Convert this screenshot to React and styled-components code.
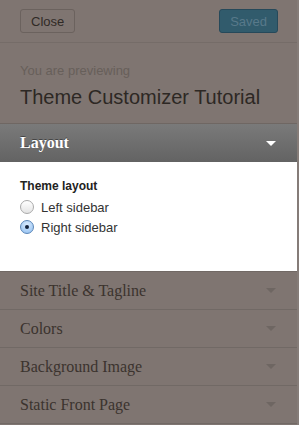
import styled, { createGlobalStyle } from "styled-components";

const GlobalStyle = createGlobalStyle`
  html, body { margin: 0; padding: 0; }
  body {
    background: #7f7571;
    font-family: "Liberation Sans", Arial, sans-serif;
  }
`;

const sections = ["Site Title & Tagline", "Colors", "Background Image", "Static Front Page"];

const Panel = styled.div`
  width: 299px;
  height: 425px;
  overflow: hidden;
  background: #7f7571;
  box-sizing: border-box;
  border-right: 2px solid #857c78;
`;

const TopBar = styled.div`
  display: flex;
  justify-content: space-between;
  align-items: center;
  height: 42px;
  padding: 0 19px 0 20px;
  border-bottom: 1px solid #756c68;
`;

const Button = styled.button`
  height: 24px;
  padding: 0 10px;
  border-radius: 3px;
  font-family: "Liberation Sans", Arial, sans-serif;
  font-size: 13px;
  border: 1px solid ${(p) => (p.$primary ? "#26495a" : "#6b625e")};
  background: ${(p) => (p.$primary ? "#315b6c" : "#7f7571")};
  color: ${(p) => (p.$primary ? "#58798a" : "#302a26")};
`;

const Info = styled.div`
  padding: 20px 20px 14px;
  border-bottom: 1px solid #6f6763;
`;

const Small = styled.div`
  font-size: 13px;
  color: #675f5a;
  line-height: 16px;
`;

const Title = styled.div`
  font-size: 20px;
  color: #2d2824;
  line-height: 24px;
  margin-top: 6px;
`;

const SectionHead = styled.div`
  display: flex;
  justify-content: space-between;
  align-items: center;
  height: ${(p) => (p.$open ? "38px" : "37px")};
  padding: 0 21px 0 20px;
  font-family: "Liberation Serif", Georgia, serif;
  font-size: 16px;
  background: ${(p) => (p.$open ? "linear-gradient(#7a7a7a, #636363)" : "#7f7571")};
  color: ${(p) => (p.$open ? "#ffffff" : "#3b332e")};
  font-weight: ${(p) => (p.$open ? "bold" : "normal")};
  text-shadow: ${(p) => (p.$open ? "0 -1px 0 #444" : "none")};
  border-bottom: ${(p) => (p.$open ? "none" : "1px solid #716965")};
`;

const Arrow = styled.span`
  width: 0;
  height: 0;
  border-left: 5px solid transparent;
  border-right: 5px solid transparent;
  border-top: 5px solid ${(p) => (p.$open ? "#ffffff" : "#6e6662")};
`;

const Content = styled.div`
  background: #ffffff;
  height: 110px;
  padding: 17px 20px 0;
  box-sizing: border-box;
  border-bottom: 1px solid #716965;
`;

const Label = styled.div`
  font-size: 12px;
  font-weight: bold;
  color: #222;
  margin-bottom: 4px;
`;

const Option = styled.label`
  display: flex;
  align-items: center;
  gap: 7px;
  height: 20px;
  font-size: 13px;
  color: #333;
`;

const Radio = styled.span`
  width: 12px;
  height: 12px;
  border-radius: 50%;
  display: flex;
  align-items: center;
  justify-content: center;
  border: 1px solid ${(p) => (p.$checked ? "#5a86b8" : "#aaaaaa")};
  background: ${(p) =>
    p.$checked
      ? "radial-gradient(circle at 50% 30%, #d8ebff, #8fbef0)"
      : "linear-gradient(#ffffff, #e4e4e4)"};
  &::after {
    content: "";
    width: 4px;
    height: 4px;
    border-radius: 50%;
    background: ${(p) => (p.$checked ? "#10203a" : "transparent")};
  }
`;

export default function App() {
  return (
    <Panel>
      <GlobalStyle />
      <TopBar>
        <Button>Close</Button>
        <Button $primary>Saved</Button>
      </TopBar>
      <Info>
        <Small>You are previewing</Small>
        <Title>Theme Customizer Tutorial</Title>
      </Info>
      <SectionHead $open>
        Layout
        <Arrow $open />
      </SectionHead>
      <Content>
        <Label>Theme layout</Label>
        <Option>
          <Radio />
          Left sidebar
        </Option>
        <Option>
          <Radio $checked />
          Right sidebar
        </Option>
      </Content>
      {sections.map((s) => (
        <SectionHead key={s}>
          {s}
          <Arrow />
        </SectionHead>
      ))}
    </Panel>
  );
}
